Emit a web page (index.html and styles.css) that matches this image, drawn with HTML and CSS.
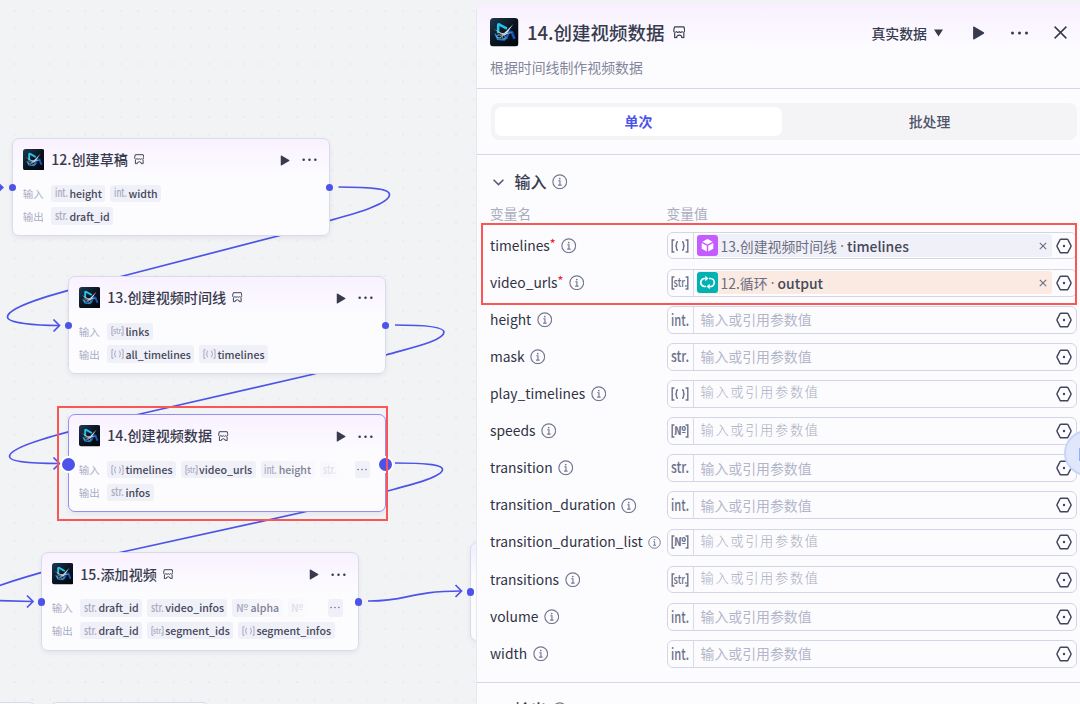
FILE: index.html
```
<!doctype html>
<html lang="zh-CN">
  <head>
    <meta charset="UTF-8" />
    <meta name="viewport" content="width=device-width, initial-scale=1.0" />
    <title>14.创建视频数据</title>
    <link rel="stylesheet" href="styles.css">
  </head>
  <body>
    <!-- Shared icons -->
    <svg class="sprite" xmlns="http://www.w3.org/2000/svg">
      <defs>
        <linearGradient id="logo-bg" x1="0" y1="0" x2="1" y2="1">
          <stop offset="0" stop-color="#1f3a50" />
          <stop offset="0.5" stop-color="#0a1420" />
          <stop offset="1" stop-color="#02060d" />
        </linearGradient>
      </defs>
      <symbol id="logo" viewBox="0 0 28 28">
        <rect width="28" height="28" rx="3.5" fill="url(#logo-bg)" />
        <path d="M8 15V7.200q0-1.400 1.300-.8l7.400 4" fill="none" stroke="#22c3e8" stroke-width="2.500" />
        <path d="M16 19.500l2.700-6 2.800.5 2.500 6.500" fill="none" stroke="#1557b8" stroke-width="2.600" />
        <path d="M5 15.500l2.500 5.300 6.500.7 3-2.500" fill="none" stroke="#1a86d6" stroke-width="1.600" />
        <path d="M11 17.800L23 5.800l-7.500 11z" fill="#d3dde3" />
        <path d="M3.500 10.500l8 4.200 11-.4-10.500 2.500z" fill="#b4c6d2" />
        <ellipse cx="9" cy="18" rx="2.300" ry="1.500" fill="none" stroke="#a9c0ce" stroke-width=".9" />
        <ellipse cx="13.500" cy="18.800" rx="1.500" ry="1.600" fill="none" stroke="#8ea6b6" stroke-width=".9" />
      </symbol>
      <symbol id="store" viewBox="0 0 12 12">
        <path d="M1.500.8h9l.7 2.800v1.600q-.8 1.500-2.600.2-1.300 1.400-2.600 0-1.300 1.400-2.600 0Q1.600 6.700.8 5.200V3.600zM1.600 6.800v4.400h2V10q2.400-2.400 4.800 0v1.200h2V6.800" fill="none" stroke="currentColor" stroke-width="1.100" stroke-linejoin="round" />
      </symbol>
      <symbol id="play" viewBox="0 0 12 14">
        <path d="M.6 1.200q0-1 .9-.6l9.800 5.700q.9.700 0 1.400l-9.800 5.700q-.9.400-.9-.6z" fill="currentColor" />
      </symbol>
      <symbol id="more" viewBox="0 0 18 4">
        <circle cx="2" cy="2" r="1.500" fill="currentColor" />
        <circle cx="9" cy="2" r="1.500" fill="currentColor" />
        <circle cx="16" cy="2" r="1.500" fill="currentColor" />
      </symbol>
      <symbol id="info" viewBox="0 0 16 16">
        <circle cx="8" cy="8" r="7.100" fill="none" stroke="currentColor" stroke-width="1.200" />
        <path d="M6.500 7h1.700v4.300M6.300 11.400h3.600" fill="none" stroke="currentColor" stroke-width="1.200" />
        <circle cx="8" cy="4.700" r=".9" fill="currentColor" />
      </symbol>
      <symbol id="hex" viewBox="0 0 16 16">
        <path d="M4.900 1.200h6.200q.5 0 .8.500l3 5.700q.3.600 0 1.200l-3 5.700q-.3.500-.8.500H4.900q-.5 0-.8-.5l-3-5.700q-.3-.6 0-1.200l3-5.700q.3-.5.800-.5z" fill="none" stroke="currentColor" stroke-width="1.400" />
        <circle cx="8" cy="8" r="1.200" fill="currentColor" />
      </symbol>
      <symbol id="brackets" viewBox="0 0 18 14">
        <path d="M3.400 1H1.200v12h2.200M14.600 1h2.200v12h-2.200" fill="none" stroke="currentColor" stroke-width="1.400" />
      </symbol>
      <symbol id="braces" viewBox="0 0 18 14">
        <path d="M3.400 1H1.200v12h2.200M14.600 1h2.200v12h-2.200" fill="none" stroke="currentColor" stroke-width="1.400" />
        <path d="M7 2.700q-1.500 0-1.500 1.500v1.300q0 1.500-1.200 1.500 1.200 0 1.200 1.500v1.300q0 1.500 1.500 1.500M11 2.700q1.500 0 1.500 1.500v1.300q0 1.500 1.200 1.500-1.200 0-1.200 1.500v1.300q0 1.500-1.500 1.500" fill="none" stroke="currentColor" stroke-width="1.400" />
      </symbol>
    </svg>

    <div class="workspace">
      <main class="canvas">
        <svg class="edges" width="476" height="704" viewBox="0 0 476 704">
          <path d="M338.500 187C375 187 389.500 189.500 389.500 194.500C389.500 204 355 213.500 330 220.500L279 235.700L123 276C85 286 7.500 304 7.500 317C7.500 323 35 325.500 59 325.500" />
          <path d="M395 325C430 325 444 327.500 444 332C444 341 410 348 386 355L312 374.500L140 414C85 428 9.500 444 9.500 456.500C9.500 462 35 463.500 59 463.500" />
          <path d="M395 463C430 463 442.500 465 442.500 469.500C442.500 477 410 485 386 491.500L304 512L120 552.500C85 560 30 575 -2 586" />
          <path d="M-2 600.500L32 601.500" />
          <path d="M368 601C408 601.500 408 591 461 591" />
          <path d="M53.500 319.500l6 6-6 6" />
          <path d="M53.500 457.500l6 6-6 6" />
          <path d="M27 595.500l6 6-6 6" />
          <path d="M455.500 585l6 6-6 6" />
          <path d="M-2 182l6 5.500-6 5.500z" class="edge-tip" />
        </svg>

        <section class="node node-12">
          <header class="node-head">
            <svg class="node-logo"><use href="#logo" /></svg>
            <h2>12.创建草稿</h2>
            <svg class="node-store"><use href="#store" /></svg>
            <svg class="node-play"><use href="#play" /></svg>
            <svg class="node-more"><use href="#more" /></svg>
          </header>
          <div class="io">
            <span class="io-label">输入</span>
            <span class="chip"><svg viewBox="0 0 18 14"><text x="0" y="12.500" textLength="18" lengthAdjust="spacingAndGlyphs">int.</text></svg>height</span>
            <span class="chip"><svg viewBox="0 0 18 14"><text x="0" y="12.500" textLength="18" lengthAdjust="spacingAndGlyphs">int.</text></svg>width</span>
          </div>
          <div class="io">
            <span class="io-label">输出</span>
            <span class="chip"><svg viewBox="0 0 18 14"><text x="0" y="12" textLength="18" lengthAdjust="spacingAndGlyphs">str.</text></svg>draft_id</span>
          </div>
          <i class="port port-in"></i>
          <i class="port port-out"></i>
        </section>

        <section class="node node-13">
          <header class="node-head">
            <svg class="node-logo"><use href="#logo" /></svg>
            <h2>13.创建视频时间线</h2>
            <svg class="node-store"><use href="#store" /></svg>
            <svg class="node-play"><use href="#play" /></svg>
            <svg class="node-more"><use href="#more" /></svg>
          </header>
          <div class="io">
            <span class="io-label">输入</span>
            <span class="chip"><svg viewBox="0 0 18 14"><use href="#brackets" /><text class="in-brackets" x="2.600" y="11" textLength="13.500" lengthAdjust="spacingAndGlyphs">str.</text></svg>links</span>
          </div>
          <div class="io">
            <span class="io-label">输出</span>
            <span class="chip"><svg viewBox="0 0 18 14"><use href="#braces" /></svg>all_timelines</span>
            <span class="chip"><svg viewBox="0 0 18 14"><use href="#braces" /></svg>timelines</span>
          </div>
          <i class="port port-in"></i>
          <i class="port port-out"></i>
        </section>

        <section class="node node-14 selected">
          <header class="node-head">
            <svg class="node-logo"><use href="#logo" /></svg>
            <h2>14.创建视频数据</h2>
            <svg class="node-store"><use href="#store" /></svg>
            <svg class="node-play"><use href="#play" /></svg>
            <svg class="node-more"><use href="#more" /></svg>
          </header>
          <div class="io">
            <span class="io-label">输入</span>
            <span class="chip"><svg viewBox="0 0 18 14"><use href="#braces" /></svg>timelines</span>
            <span class="chip"><svg viewBox="0 0 18 14"><use href="#brackets" /><text class="in-brackets" x="2.600" y="11" textLength="13.500" lengthAdjust="spacingAndGlyphs">str.</text></svg>video_urls</span>
            <span class="chip fading"><svg viewBox="0 0 18 14"><text x="0" y="12.500" textLength="18" lengthAdjust="spacingAndGlyphs">int.</text></svg>height</span>
            <span class="chip faded"><svg viewBox="0 0 18 14"><text x="0" y="12" textLength="18" lengthAdjust="spacingAndGlyphs">str.</text></svg></span>
            <span class="chip overflow"><svg><use href="#more" /></svg></span>
          </div>
          <div class="io">
            <span class="io-label">输出</span>
            <span class="chip"><svg viewBox="0 0 18 14"><text x="0" y="12" textLength="18" lengthAdjust="spacingAndGlyphs">str.</text></svg>infos</span>
          </div>
          <i class="port port-in"></i>
          <i class="port port-out"></i>
        </section>

        <section class="node node-15">
          <header class="node-head">
            <svg class="node-logo"><use href="#logo" /></svg>
            <h2>15.添加视频</h2>
            <svg class="node-store"><use href="#store" /></svg>
            <svg class="node-play"><use href="#play" /></svg>
            <svg class="node-more"><use href="#more" /></svg>
          </header>
          <div class="io">
            <span class="io-label">输入</span>
            <span class="chip"><svg viewBox="0 0 18 14"><text x="0" y="12" textLength="18" lengthAdjust="spacingAndGlyphs">str.</text></svg>draft_id</span>
            <span class="chip"><svg viewBox="0 0 18 14"><text x="0" y="12" textLength="18" lengthAdjust="spacingAndGlyphs">str.</text></svg>video_infos</span>
            <span class="chip fading"><svg viewBox="0 0 18 14"><text x="0" y="12.500" textLength="17" lengthAdjust="spacingAndGlyphs">№</text></svg>alpha</span>
            <span class="chip faded"><svg viewBox="0 0 18 14"><text x="0" y="12.500" textLength="17" lengthAdjust="spacingAndGlyphs">№</text></svg></span>
            <span class="chip overflow"><svg><use href="#more" /></svg></span>
          </div>
          <div class="io">
            <span class="io-label">输出</span>
            <span class="chip"><svg viewBox="0 0 18 14"><text x="0" y="12" textLength="18" lengthAdjust="spacingAndGlyphs">str.</text></svg>draft_id</span>
            <span class="chip"><svg viewBox="0 0 18 14"><use href="#brackets" /><text class="in-brackets" x="2.600" y="11" textLength="13.500" lengthAdjust="spacingAndGlyphs">str.</text></svg>segment_ids</span>
            <span class="chip"><svg viewBox="0 0 18 14"><use href="#braces" /></svg>segment_infos</span>
          </div>
          <i class="port port-in"></i>
          <i class="port port-out"></i>
        </section>

        <section class="node node-next"><i class="port port-in"></i></section>
        <section class="node node-below-a"></section>
        <section class="node node-below-b"></section>
        <div class="mark mark-node"></div>
      </main>

      <aside class="panel">
        <header class="panel-head">
          <div class="panel-title">
            <svg class="panel-logo"><use href="#logo" /></svg>
            <h1>14.创建视频数据</h1>
            <svg class="panel-store"><use href="#store" /></svg>
            <span class="data-select">真实数据<svg width="9" height="8" viewBox="0 0 9 8"><path d="M0 .5h9L4.500 7.500z" fill="currentColor" /></svg></span>
            <svg class="panel-play"><use href="#play" /></svg>
            <svg class="panel-more"><use href="#more" /></svg>
            <svg class="panel-close" viewBox="0 0 13 13"><path d="M.6.6l11.800 11.800M12.400.6L.6 12.400" fill="none" stroke="currentColor" stroke-width="1.500" /></svg>
          </div>
          <p>根据时间线制作视频数据</p>
        </header>

        <div class="tabs-wrap">
          <div class="tabs">
            <button class="tab active">单次</button>
            <button class="tab">批处理</button>
          </div>
        </div>

        <section class="inputs">
          <h3 class="section-title">
            <svg class="chevron" viewBox="0 0 10 6"><path d="M.5.5L5 5 9.500.5" fill="none" stroke="currentColor" stroke-width="1.500" /></svg>
            <span>输入</span>
            <svg class="info"><use href="#info" /></svg>
          </h3>
          <div class="row columns"><span>变量名</span><span>变量值</span></div>

          <div class="row">
            <label>timelines<b>*</b><svg class="info"><use href="#info" /></svg></label>
            <div class="field">
              <span class="type"><svg viewBox="0 0 18 14"><use href="#braces" /></svg></span>
              <span class="ref">
                <svg class="ref-icon" viewBox="0 0 21 21"><rect width="21" height="21" rx="3" fill="#c45cff" /><path d="M10.500 4l5.200 2.700-5.200 2.800-5.200-2.800zM4.700 8l5.100 2.700v5.800l-5.100-2.800zM16.300 8v5.700l-5.100 2.800v-5.800z" fill="#fff" /></svg>
                13.创建视频时间线<em>·</em><strong>timelines</strong>
                <svg class="ref-clear" viewBox="0 0 8 8"><path d="M.8.8l6.400 6.400M7.200.8L.8 7.200" fill="none" stroke="currentColor" stroke-width="1.100" /></svg>
              </span>
              <svg class="hex"><use href="#hex" /></svg>
            </div>
          </div>
          <div class="row">
            <label>video_urls<b>*</b><svg class="info"><use href="#info" /></svg></label>
            <div class="field">
              <span class="type"><svg viewBox="0 0 18 14"><use href="#brackets" /><text class="in-brackets" x="2.600" y="11" textLength="13.500" lengthAdjust="spacingAndGlyphs">str.</text></svg></span>
              <span class="ref loop">
                <svg class="ref-icon" viewBox="0 0 21 21"><rect width="21" height="21" rx="3" fill="#00b2b2" /><path d="M8.500 6.500H8a4 4 0 0 0-.5 8H9M12.500 14.500H13a4 4 0 0 0 .5-8H12" fill="none" stroke="#fff" stroke-width="1.700" /><path d="M8.300 3.800v5.400l3.200-2.700zM12.700 11.800v5.400l-3.200-2.700z" fill="#fff" /></svg>
                12.循环<em>·</em><strong>output</strong>
                <svg class="ref-clear" viewBox="0 0 8 8"><path d="M.8.8l6.400 6.400M7.200.8L.8 7.200" fill="none" stroke="currentColor" stroke-width="1.100" /></svg>
              </span>
              <svg class="hex"><use href="#hex" /></svg>
            </div>
          </div>
          <div class="row">
            <label>height<svg class="info"><use href="#info" /></svg></label>
            <div class="field">
              <span class="type"><svg viewBox="0 0 18 14"><text x="0" y="12.500" textLength="18" lengthAdjust="spacingAndGlyphs">int.</text></svg></span>
              <span class="placeholder">输入或引用参数值</span>
              <svg class="hex"><use href="#hex" /></svg>
            </div>
          </div>
          <div class="row">
            <label>mask<svg class="info"><use href="#info" /></svg></label>
            <div class="field">
              <span class="type"><svg viewBox="0 0 18 14"><text x="0" y="12" textLength="18" lengthAdjust="spacingAndGlyphs">str.</text></svg></span>
              <span class="placeholder">输入或引用参数值</span>
              <svg class="hex"><use href="#hex" /></svg>
            </div>
          </div>
          <div class="row">
            <label>play_timelines<svg class="info"><use href="#info" /></svg></label>
            <div class="field">
              <span class="type"><svg viewBox="0 0 18 14"><use href="#braces" /></svg></span>
              <span class="placeholder light">输入或引用参数值</span>
              <svg class="hex"><use href="#hex" /></svg>
            </div>
          </div>
          <div class="row">
            <label>speeds<svg class="info"><use href="#info" /></svg></label>
            <div class="field">
              <span class="type"><svg viewBox="0 0 18 14"><use href="#brackets" /><text class="num-brackets" x="3" y="10.800" textLength="12" lengthAdjust="spacingAndGlyphs">№</text></svg></span>
              <span class="placeholder light">输入或引用参数值</span>
              <svg class="hex"><use href="#hex" /></svg>
            </div>
          </div>
          <div class="row">
            <label>transition<svg class="info"><use href="#info" /></svg></label>
            <div class="field">
              <span class="type"><svg viewBox="0 0 18 14"><text x="0" y="12" textLength="18" lengthAdjust="spacingAndGlyphs">str.</text></svg></span>
              <span class="placeholder">输入或引用参数值</span>
              <svg class="hex"><use href="#hex" /></svg>
            </div>
          </div>
          <div class="row">
            <label>transition_duration<svg class="info"><use href="#info" /></svg></label>
            <div class="field">
              <span class="type"><svg viewBox="0 0 18 14"><text x="0" y="12.500" textLength="18" lengthAdjust="spacingAndGlyphs">int.</text></svg></span>
              <span class="placeholder">输入或引用参数值</span>
              <svg class="hex"><use href="#hex" /></svg>
            </div>
          </div>
          <div class="row">
            <label>transition_duration_list<svg class="info small"><use href="#info" /></svg></label>
            <div class="field">
              <span class="type"><svg viewBox="0 0 18 14"><use href="#brackets" /><text class="num-brackets" x="3" y="10.800" textLength="12" lengthAdjust="spacingAndGlyphs">№</text></svg></span>
              <span class="placeholder light">输入或引用参数值</span>
              <svg class="hex"><use href="#hex" /></svg>
            </div>
          </div>
          <div class="row">
            <label>transitions<svg class="info"><use href="#info" /></svg></label>
            <div class="field">
              <span class="type"><svg viewBox="0 0 18 14"><use href="#brackets" /><text class="in-brackets" x="2.600" y="11" textLength="13.500" lengthAdjust="spacingAndGlyphs">str.</text></svg></span>
              <span class="placeholder light">输入或引用参数值</span>
              <svg class="hex"><use href="#hex" /></svg>
            </div>
          </div>
          <div class="row">
            <label>volume<svg class="info"><use href="#info" /></svg></label>
            <div class="field">
              <span class="type"><svg viewBox="0 0 18 14"><text x="0" y="12.500" textLength="18" lengthAdjust="spacingAndGlyphs">int.</text></svg></span>
              <span class="placeholder">输入或引用参数值</span>
              <svg class="hex"><use href="#hex" /></svg>
            </div>
          </div>
          <div class="row">
            <label>width<svg class="info"><use href="#info" /></svg></label>
            <div class="field">
              <span class="type"><svg viewBox="0 0 18 14"><text x="0" y="12.500" textLength="18" lengthAdjust="spacingAndGlyphs">int.</text></svg></span>
              <span class="placeholder">输入或引用参数值</span>
              <svg class="hex"><use href="#hex" /></svg>
            </div>
          </div>
        </section>

        <section class="outputs">
          <h3 class="section-title">
            <svg class="chevron" viewBox="0 0 10 6"><path d="M.5.5L5 5 9.500.5" fill="none" stroke="currentColor" stroke-width="1.500" /></svg>
            <span>输出</span>
            <svg class="info"><use href="#info" /></svg>
          </h3>
        </section>
      </aside>

      <div class="mark mark-fields"></div>
      <div class="float-button"><i></i></div>
    </div>
  </body>
</html>
```

FILE: styles.css
```
* {
  margin: 0;
  padding: 0;
  box-sizing: border-box;
}

body {
  width: 1080px;
  height: 704px;
  overflow: hidden;
  font-family: 'Noto Sans CJK SC', 'Noto Sans', sans-serif;
  background: #f1f3f5;
  color: #383b4d;
}

svg {
  display: block;
  flex: none;
}

.sprite {
  position: absolute;
  width: 0;
  height: 0;
}

.workspace {
  position: relative;
  display: flex;
  height: 704px;
  overflow: hidden;
}

/* Canvas */
.canvas {
  position: relative;
  width: 476px;
  height: 704px;
  overflow: hidden;
  background-image: radial-gradient(circle, #e9ebef 0.9px, transparent 1.4px);
  background-size: 17.67px 17.67px;
  background-position: 5.8px 2.2px;
}

.edges {
  position: absolute;
  inset: 0;
  fill: none;
  stroke: #4d53e8;
  stroke-width: 1.7;
}

.edges .edge-tip {
  fill: #4d53e8;
  stroke: none;
}

.node {
  position: absolute;
  width: 318px;
  height: 98.5px;
  padding: 0 11.5px 0 9.7px;
  border: 1px solid #d9dbe8;
  border-radius: 7px;
  background: linear-gradient(#f9f1ff, #fcfcff 38px);
  box-shadow: 0 2px 5px rgba(40, 45, 80, 0.07);
}

.node-12 { left: 12px; top: 137.5px; }
.node-13 { left: 68px; top: 275.5px; }
.node-14 { left: 68px; top: 413.8px; }
.node-15 { left: 41px; top: 552.2px; }

.node-next {
  left: 470px;
  top: 542px;
  background: linear-gradient(#efefff, #fcfcff 38px);
}

.node-below-a { left: -282px; top: 701.5px; background: #fcfcff; }
.node-below-b { left: 50px; top: 701.5px; width: 159px; background: #fcfcff; }

.node.selected {
  border-color: #948ff5;
}

.node-head {
  display: flex;
  align-items: center;
  height: 42px;
  margin-bottom: 4px;
  color: #383b4d;
}

.node-head h2 {
  margin: 0 6px 0 7px;
  padding-bottom: 1px;
  font-size: 14.1px;
  font-weight: 500;
  line-height: 20px;
  white-space: nowrap;
}

.node-logo { width: 21.5px; height: 21.5px; }
.node-store { width: 10.5px; height: 10.5px; }
.node-play { width: 10px; height: 11px; margin: 1px 0 0 auto; }
.node-more { width: 15px; height: 3.5px; margin: 1px 0.5px 0 12px; }

.io {
  display: flex;
  align-items: center;
  gap: 5px;
  height: 17.5px;
  margin-bottom: 5.3px;
}

.io-label {
  width: 23.7px;
  color: #a9adc3;
  font-size: 10.5px;
  line-height: 17px;
}

.chip {
  display: flex;
  align-items: center;
  gap: 1.5px;
  height: 17.5px;
  padding: 0 3.5px;
  border-radius: 3px;
  background: #f0f0f8;
  color: #45485a;
  font-size: 10.6px;
  font-weight: 500;
  line-height: 17px;
  white-space: nowrap;
}

.chip svg {
  width: 13px;
  height: 10px;
  color: #a5a9bf;
}

/* Variable type glyphs */
.chip svg,
.type svg {
  overflow: visible;
}

.chip text,
.type text {
  fill: currentColor;
  font-size: 15.5px;
  font-weight: 500;
}

.chip text.in-brackets,
.type text.in-brackets {
  font-size: 12.5px;
}

.type text.num-brackets {
  font-size: 11.5px;
  font-weight: 700;
}

.chip.fading {
  background: linear-gradient(90deg, #f0f0f8, #f9f9fd);
  color: #7e8192;
}

.chip.faded {
  opacity: 0.35;
  background: linear-gradient(90deg, #f0f0f8, #fcfcff);
}

.chip.overflow {
  justify-content: center;
  width: 14.5px;
  margin: 0 4px 0 auto;
  padding: 0;
}

.chip.overflow svg {
  width: 10px;
  height: 3px;
  color: #6f7387;
}

.port {
  position: absolute;
  top: 45.3px;
  width: 7.4px;
  height: 7.4px;
  border-radius: 50%;
  background: #4d53e8;
}

.port-in { left: -4.2px; }
.port-out { right: -4.2px; }

.selected .port {
  top: 41px;
  width: 17px;
  height: 17px;
  border: 2.3px solid #fff;
}

.selected .port-in { left: -9px; }
.selected .port-out { right: -9px; }

.mark {
  position: absolute;
  border: 2px solid #fb5555;
}

.mark-node { left: 57px; top: 406px; width: 331px; height: 115px; }
.mark-fields { left: 481px; top: 223px; width: 596px; height: 82px; }

/* Panel */
.panel {
  width: 604px;
  height: 700px;
  margin-top: 4px;
  border-left: 1px solid #e6e7f1;
  border-top-left-radius: 8px;
  background: #fcfcff;
  overflow: hidden;
}

.panel-head {
  height: 85px;
  padding: 14px 13px 0 13px;
  border-bottom: 1px solid #d5d7e8;
  background: linear-gradient(#f9f0ff, #fcfcff 46px);
}

.panel-title {
  display: flex;
  align-items: center;
  height: 29px;
  color: #383b4d;
}

.panel-title h1 {
  margin: 0 8px 0 8.5px;
  padding-bottom: 1px;
  font-size: 18.5px;
  font-weight: 500;
  line-height: 27px;
}

.panel-logo { width: 28.5px; height: 28.5px; }
.panel-store { width: 12.5px; height: 12.5px; }
.panel-play { width: 13px; height: 14px; }
.panel-more { width: 19px; height: 4px; margin: 0 25.5px 0 25px; }
.panel-close { width: 13px; height: 13px; }

.data-select {
  display: flex;
  align-items: center;
  gap: 7px;
  margin: 0 28.5px 0 auto;
  font-size: 13.9px;
  font-weight: 500;
}

.panel-head p {
  margin-top: 9.5px;
  color: #83869a;
  font-size: 13.9px;
  line-height: 20px;
}

.tabs-wrap {
  height: 66px;
  padding: 14px 3px 0 14px;
  border-bottom: 1px solid #d5d7e8;
}

.tabs {
  display: flex;
  height: 37px;
  padding: 4px;
  border-radius: 8px;
  background: #f4f4f7;
}

.tab {
  flex: 1;
  margin-left: 4px;
  padding-bottom: 2px;
  border: none;
  border-radius: 7px;
  background: none;
  color: #515469;
  font-family: inherit;
  font-size: 13.9px;
  font-weight: 500;
}

.tab.active {
  margin-left: 0;
  background: #fff;
  color: #4d53e8;
  font-weight: 700;
}

.inputs {
  height: 528px;
  padding: 13px 3px 0 13px;
  border-bottom: 1px solid #d5d7e8;
}

.outputs {
  padding: 13px 3px 0 13px;
}

.section-title {
  display: flex;
  align-items: center;
  gap: 5.5px;
  height: 28px;
  padding-left: 3px;
  font-size: 16px;
  font-weight: 500;
}

.section-title span {
  padding-bottom: 2px;
}

.section-title .chevron {
  width: 11px;
  height: 7px;
  margin-right: 5px;
  color: #5b5e72;
}

.info {
  width: 15.5px;
  height: 15.5px;
  color: #747890;
}

.info.small {
  width: 13px;
  height: 13px;
}

.row {
  display: grid;
  grid-template-columns: 176.5px 1fr;
  align-items: center;
  height: 37.12px;
}

.row.columns {
  height: 32px;
  margin-bottom: -1px;
  padding-top: 1px;
  color: #a9acba;
  font-size: 13.7px;
}

.row label {
  display: flex;
  align-items: center;
  padding-bottom: 2px;
  color: #303342;
  font-size: 13.85px;
  line-height: 22px;
  white-space: nowrap;
}

.row label .info {
  margin: 2px 0 0 5.5px;
}

.row label .info.small {
  margin-left: 5px;
}

.row label b {
  padding-bottom: 3px;
  color: #f5222d;
  font-size: 12px;
  font-weight: 500;
}

.field {
  display: flex;
  align-items: center;
  height: 27.8px;
  padding-right: 4px;
  border: 1px solid #d3d6e6;
  border-radius: 6px;
}

.type {
  display: flex;
  align-items: center;
  justify-content: center;
  align-self: stretch;
  width: 26px;
  border-right: 1px solid #d9dbe9;
  color: #6d7188;
}

.type svg {
  width: 18px;
  height: 14px;
}

.placeholder {
  flex: 1;
  padding: 0 0 1px 7px;
  color: #b3b6c9;
  font-size: 13.9px;
  line-height: 22px;
}

.placeholder.light {
  padding-bottom: 3px;
  color: #a9acc0;
  font-size: 13.3px;
  font-weight: 300;
  letter-spacing: 1.6px;
}

.ref {
  display: flex;
  flex: 1;
  align-items: center;
  height: 23px;
  margin: 0 4px 0 3px;
  padding-right: 5px;
  border-radius: 3px;
  background: #f0f0f8;
  color: #6b6e83;
  font-size: 13.9px;
  line-height: 22px;
}

.ref.loop {
  background: #faeae1;
}

.ref em {
  width: 10px;
  font-family: 'Noto Sans', sans-serif;
  font-style: normal;
  text-align: center;
}

.ref strong {
  color: #45485a;
  font-weight: 500;
}

.ref-icon {
  width: 21px;
  height: 21px;
  margin-right: 3px;
}

.ref-clear {
  width: 8px;
  height: 8px;
  margin-left: auto;
}

.hex {
  width: 16px;
  height: 16px;
  color: #41445a;
}

.float-button {
  position: absolute;
  left: 1064px;
  top: 430px;
  width: 46px;
  height: 46px;
  padding: 16px 0 0 13px;
  border: 2px solid #c8d5fb;
  border-radius: 50%;
  background: #e0e7fb;
}

.float-button i {
  display: block;
  width: 16px;
  height: 13px;
  background: #8fb0fb;
}
```
